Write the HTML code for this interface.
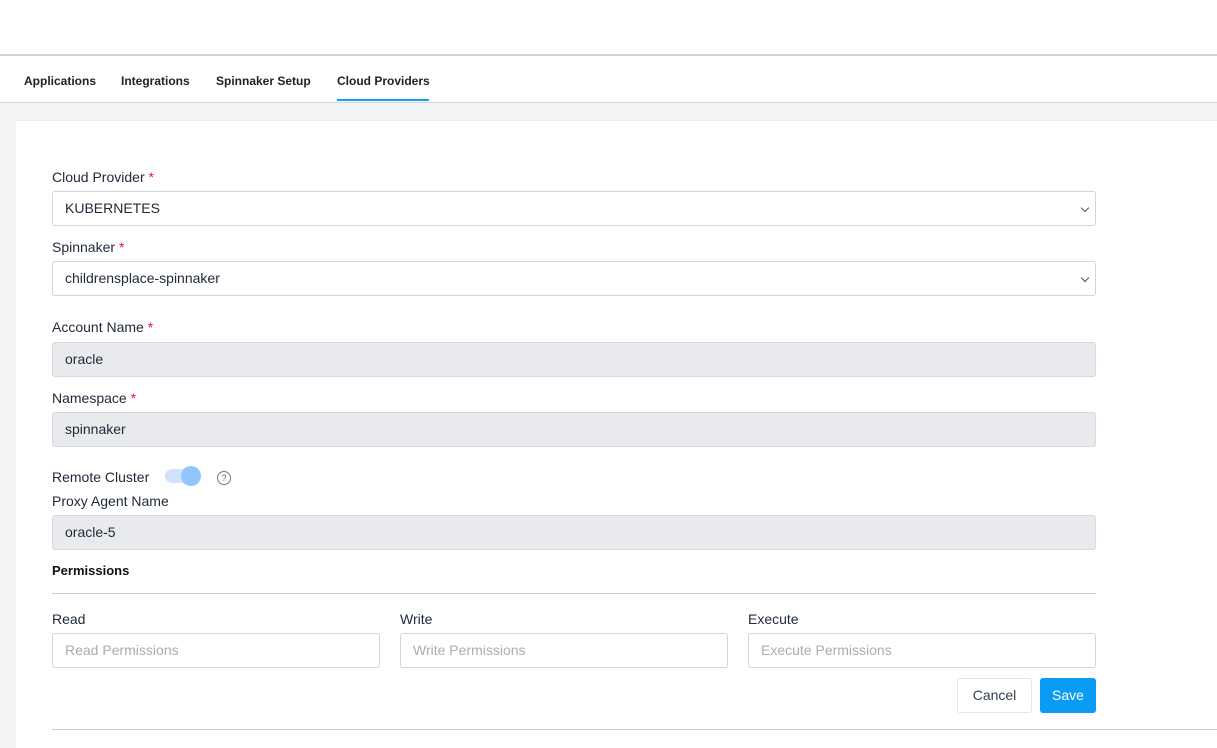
<!DOCTYPE html>
<html><head><style>
*{box-sizing:border-box;margin:0;padding:0}
body{width:1217px;height:748px;overflow:hidden;background:#fff;font-family:"Liberation Sans",Arial,sans-serif;color:#1f2937;position:relative}
.abs{position:absolute}
.lbl{position:absolute;left:52px;font-size:14px;color:#1f2937}
.req{color:#e11d2a}
.box{position:absolute;left:52px;width:1044px;height:35px;border:1px solid #d1d5db;border-radius:3px;font-size:14px;padding-left:12px;line-height:33px;background:#fff}
.grey{background:#e8eaed;border-color:#d6d9dd}
.chev{position:absolute;right:7px;top:13px;width:6px;height:6px;border-right:1.3px solid #555;border-bottom:1.3px solid #555;transform:rotate(45deg)}
.tab{position:absolute;top:74px;font-size:12px;font-weight:bold;color:#222}
.ph{position:absolute;top:633px;width:328px;height:35px;border:1px solid #d1d5db;border-radius:3px;font-size:14px;color:#a8adb4;padding-left:12px;line-height:33px}
</style></head><body>
<div class="abs" style="left:0;top:54px;width:1217px;height:2px;background:#d3d5d8"></div>
<div class="tab" style="left:24px">Applications</div>
<div class="tab" style="left:121px">Integrations</div>
<div class="tab" style="left:216px">Spinnaker Setup</div>
<div class="tab" style="left:337px">Cloud Providers</div>
<div class="abs" style="left:337px;top:99px;width:92px;height:2px;background:#0ea5e9"></div>
<div class="abs" style="left:0;top:102px;width:1217px;height:1px;background:#d3d5d8"></div>
<div class="abs" style="left:0;top:103px;width:1217px;height:645px;background:#f3f4f6"></div>
<div class="abs" style="left:16px;top:120px;width:1201px;height:628px;background:#fff;border-top:1px solid #eceef0"></div>

<div class="lbl" style="top:169px">Cloud Provider <span class="req">*</span></div>
<div class="box" style="top:191px">KUBERNETES<div class="chev"></div></div>
<div class="lbl" style="top:239px">Spinnaker <span class="req">*</span></div>
<div class="box" style="top:261px">childrensplace-spinnaker<div class="chev"></div></div>
<div class="lbl" style="top:319px">Account Name <span class="req">*</span></div>
<div class="box grey" style="top:342px">oracle</div>
<div class="lbl" style="top:390px">Namespace <span class="req">*</span></div>
<div class="box grey" style="top:412px">spinnaker</div>
<div class="lbl" style="top:469px">Remote Cluster</div>
<div class="abs" style="left:165px;top:469px;width:34px;height:14px;border-radius:7px;background:#cfe3fb"></div>
<div class="abs" style="left:181px;top:466px;width:20px;height:20px;border-radius:50%;background:#93c5fd"></div>
<div class="abs" style="left:217px;top:471px;width:14px;height:14px;border-radius:50%;border:1px solid #777;font-size:9px;text-align:center;line-height:12px;color:#666">?</div>
<div class="lbl" style="top:493px">Proxy Agent Name</div>
<div class="box grey" style="top:515px">oracle-5</div>
<div class="lbl" style="top:563px;font-weight:bold;font-size:13px;color:#111">Permissions</div>
<div class="abs" style="left:52px;top:593px;width:1044px;height:1px;background:#c9ccd0"></div>
<div class="lbl" style="top:611px">Read</div>
<div class="lbl" style="top:611px;left:400px">Write</div>
<div class="lbl" style="top:611px;left:748px">Execute</div>
<div class="ph" style="left:52px">Read Permissions</div>
<div class="ph" style="left:400px">Write Permissions</div>
<div class="ph" style="left:748px;width:348px">Execute Permissions</div>
<div class="abs" style="left:957px;top:678px;width:75px;height:35px;border:1px solid #e2e5e9;border-radius:3px;font-size:14px;text-align:center;line-height:33px;color:#374151">Cancel</div>
<div class="abs" style="left:1040px;top:678px;width:56px;height:35px;border-radius:3px;background:#0a9cf5;color:#fff;font-size:14px;text-align:center;line-height:35px">Save</div>
<div class="abs" style="left:52px;top:729px;width:1165px;height:1px;background:#c9ccd0"></div>
</body></html>
